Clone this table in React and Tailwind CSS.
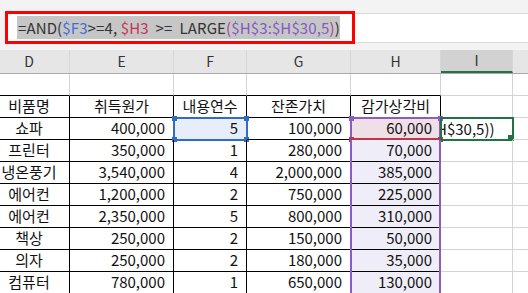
import React from "react";

const cols = [
  { key: "D", w: "w-[81px]" },
  { key: "E", w: "w-[104px]" },
  { key: "F", w: "w-[73px]" },
  { key: "G", w: "w-[104px]" },
  { key: "H", w: "w-[90px]" },
  { key: "I", w: "w-[72px]" },
  { key: "J", w: "w-[80px]" },
];

const rows = [
  ["쇼파", "400,000", "5", "100,000", "60,000"],
  ["프린터", "350,000", "1", "280,000", "70,000"],
  ["냉온풍기", "3,540,000", "4", "2,000,000", "385,000"],
  ["에어컨", "1,200,000", "2", "750,000", "225,000"],
  ["에어컨", "2,350,000", "5", "800,000", "310,000"],
  ["책상", "250,000", "2", "150,000", "50,000"],
  ["의자", "250,000", "2", "180,000", "35,000"],
  ["컴퓨터", "780,000", "1", "650,000", "130,000"],
];

const titles = ["비품명", "취득원가", "내용연수", "잔존가치", "감가상각비"];

const font = { fontFamily: '"Noto Sans CJK KR", "Noto Sans", sans-serif' };

function Handle({ className }) {
  return <div className={`absolute w-[5px] h-[5px] ${className}`} />;
}

function FormulaBar() {
  return (
    <div className="flex h-[33px]">
      <div className="w-[5px] bg-[#f3f3f3]" />
      <div className="w-[350px] border-[3px] border-[#ff0000] bg-white flex items-center pl-[9px]">
        <span className="bg-[#c6c6c6] h-[23px] leading-[23px] pl-[1px] text-[15px] tracking-[0.12px] whitespace-pre text-[#333]">
          =AND(<span className="text-[#3b6fd6]">$F3</span>{">=4, "}
          <span className="text-[#c8305a]">$H3</span>{"  >=  LARGE"}
          <span className="text-[#b0409a]">(</span>
          <span className="text-[#8358c4]">$H$3:$H$30,5</span>
          <span className="text-[#b0409a]">)</span>)
        </span>
      </div>
      <div className="flex-1 flex flex-col">
        <div className="h-[3px] bg-[#f3f3f3] border-b border-[#dadada]" />
        <div className="flex-1 bg-white" />
        <div className="h-[2px] bg-[#f3f3f3] border-t border-[#dadada]" />
      </div>
    </div>
  );
}

function HeaderRow() {
  return (
    <div className="flex h-[24px] bg-[#e6e6e6] border-b border-[#ababab] -ml-[11px]">
      {cols.map((c) => (
        <div
          key={c.key}
          className={`${c.w} shrink-0 flex items-center justify-center text-[14px] text-[#333] border-r border-[#d6d6d6] ${
            c.key === "I" ? "bg-[#d2d2d2] border-b-2 border-b-[#217346]" : ""
          }`}
        >
          {c.key}
        </div>
      ))}
    </div>
  );
}

function Cell({ w, dark, align = "right", children, className = "" }) {
  const border = dark ? "border-r border-b border-black" : "border-r border-b border-[#d4d4d4]";
  const al = align === "center" ? "justify-center" : align === "left" ? "justify-start" : "justify-end pr-[8px]";
  return (
    <div className={`${w} shrink-0 h-[22px] relative flex items-center ${al} ${border} ${className}`}>
      {children}
    </div>
  );
}

export default function App() {
  return (
    <div className="w-[528px] h-[293px] overflow-hidden bg-white text-[#111]" style={font}>
      <div className="h-[11px] bg-[#f3f3f3]" />
      <FormulaBar />
      <div className="h-[6px] bg-[#f3f3f3]" />
      <HeaderRow />

      <div className="-ml-[11px] text-[15px]">
        {/* row 2, blank */}
        <div className="flex">
          {cols.map((c, i) => (
            <Cell key={c.key} w={c.w} className={i < 5 ? "border-b-black" : ""} />
          ))}
        </div>

        {/* row 3, titles */}
        <div className="flex">
          {titles.map((t, i) => (
            <Cell key={t} w={cols[i].w} dark align="center">
              {t}
            </Cell>
          ))}
          <Cell w={cols[5].w} />
          <Cell w={cols[6].w} />
        </div>

        {rows.map((r, ri) => (
          <div className="flex" key={ri}>
            <Cell w={cols[0].w} dark align="center">{r[0]}</Cell>
            <Cell w={cols[1].w} dark>{r[1]}</Cell>
            <Cell w={cols[2].w} dark className={ri === 0 ? "bg-[#e8eef9]" : ""}>
              {r[2]}
              {ri === 0 && (
                <div className="absolute -left-[1px] -top-[1px] w-[75px] h-[24px] border-2 border-[#2f6cc4]">
                  <Handle className="bg-[#2f6cc4] -left-[3px] -top-[3px]" />
                  <Handle className="bg-[#2f6cc4] -right-[3px] -top-[3px]" />
                  <Handle className="bg-[#2f6cc4] -left-[3px] -bottom-[3px]" />
                  <Handle className="bg-[#2f6cc4] -right-[3px] -bottom-[3px]" />
                </div>
              )}
            </Cell>
            <Cell w={cols[3].w} dark>{r[3]}</Cell>
            <Cell w={cols[4].w} dark className={ri === 0 ? "bg-[#efdfe6]" : "bg-[#efedf7]"}>
              {r[4]}
              <div className="absolute -left-[1px] top-0 bottom-[-1px] w-[2px] bg-[#8a5cc4]" />
              <div className="absolute right-[-1px] top-0 bottom-[-1px] w-[2px] bg-[#8a5cc4]" />
              {ri === 0 && (
                <>
                  <div className="absolute -left-[1px] -right-[1px] -top-[1px] h-[2px] bg-[#8a5cc4]" />
                  <div className="absolute -left-[1px] -right-[1px] -bottom-[1px] h-[2px] bg-[#c0354a]" />
                  <Handle className="bg-[#8a5cc4] -left-[2px] -top-[2px]" />
                  <Handle className="bg-[#8a5cc4] -right-[3px] -top-[2px]" />
                  <Handle className="bg-[#c0354a] -left-[2px] -bottom-[3px]" />
                  <Handle className="bg-[#c0354a] -right-[3px] -bottom-[3px]" />
                </>
              )}
            </Cell>
            <Cell w={cols[5].w} align="left">
              {ri === 0 && (
                <div className="absolute -left-[1px] -top-[1px] w-[74px] h-[24px] border-2 border-[#217346] overflow-hidden flex items-center">
                  <span className="-ml-[6px] whitespace-pre">H$30,5))</span>
                  <Handle className="bg-[#217346] -right-[1px] -bottom-[1px] w-[4px] h-[4px]" />
                </div>
              )}
            </Cell>
            <Cell w={cols[6].w} />
          </div>
        ))}
      </div>
    </div>
  );
}
